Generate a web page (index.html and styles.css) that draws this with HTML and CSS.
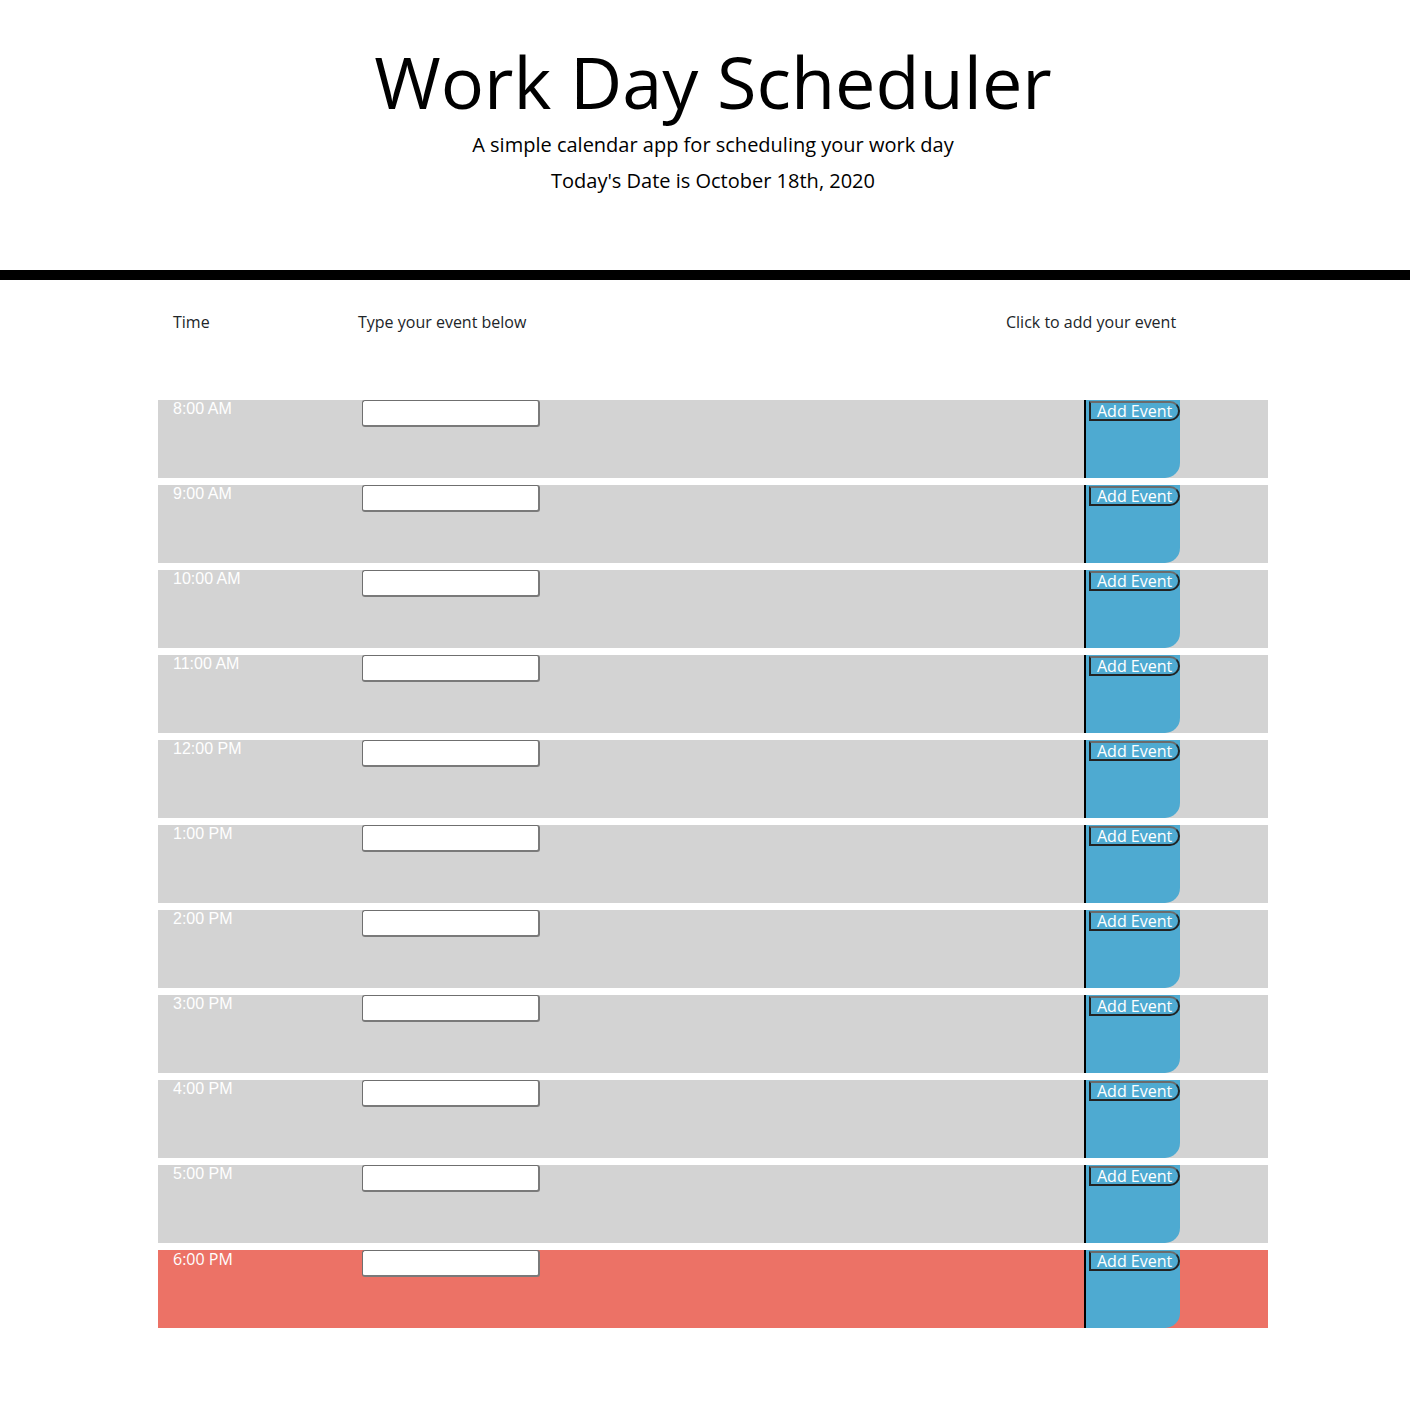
FILE: index.html
```html
<!DOCTYPE html>
<html lang="en">
<head>
<meta charset="utf-8">
<title>Work Day Scheduler</title>
<link rel="stylesheet" href="styles.css">
</head>
<body>
<header class="jumbotron">
  <h1 class="title">Work Day Scheduler</h1>
  <p class="lead">A simple calendar app for scheduling your work day</p>
  <p class="today">Today's Date is October 18th, 2020</p>
</header>
<div class="divider"></div>
<main class="container">
  <div class="labels">
    <div class="col-time">Time</div>
    <div class="col-event">Type your event below</div>
    <div class="col-add">Click to add your event</div>
  </div>
  <div class="rows">
    <div class="row past"><div class="hour">8:00 AM</div><div class="event"><input class="event-input" type="text"></div><div class="save"><button class="save-btn">Add Event</button></div></div>
    <div class="row past"><div class="hour">9:00 AM</div><div class="event"><input class="event-input" type="text"></div><div class="save"><button class="save-btn">Add Event</button></div></div>
    <div class="row past"><div class="hour">10:00 AM</div><div class="event"><input class="event-input" type="text"></div><div class="save"><button class="save-btn">Add Event</button></div></div>
    <div class="row past"><div class="hour">11:00 AM</div><div class="event"><input class="event-input" type="text"></div><div class="save"><button class="save-btn">Add Event</button></div></div>
    <div class="row past"><div class="hour">12:00 PM</div><div class="event"><input class="event-input" type="text"></div><div class="save"><button class="save-btn">Add Event</button></div></div>
    <div class="row past"><div class="hour">1:00 PM</div><div class="event"><input class="event-input" type="text"></div><div class="save"><button class="save-btn">Add Event</button></div></div>
    <div class="row past"><div class="hour">2:00 PM</div><div class="event"><input class="event-input" type="text"></div><div class="save"><button class="save-btn">Add Event</button></div></div>
    <div class="row past"><div class="hour">3:00 PM</div><div class="event"><input class="event-input" type="text"></div><div class="save"><button class="save-btn">Add Event</button></div></div>
    <div class="row past"><div class="hour">4:00 PM</div><div class="event"><input class="event-input" type="text"></div><div class="save"><button class="save-btn">Add Event</button></div></div>
    <div class="row past"><div class="hour">5:00 PM</div><div class="event"><input class="event-input" type="text"></div><div class="save"><button class="save-btn">Add Event</button></div></div>
    <div class="row present"><div class="hour">6:00 PM</div><div class="event"><input class="event-input" type="text"></div><div class="save"><button class="save-btn">Add Event</button></div></div>
  </div>
</main>
</body>
</html>
```
FILE: styles.css
```css
html, body {
  margin: 0;
  padding: 0;
  background: #fff;
  font-family: "Open Sans", "Noto Sans", sans-serif;
  color: #212529;
}

.jumbotron {
  text-align: center;
  padding-top: 37px;
  padding-left: 16px;
  height: 230px;
  box-sizing: border-box;
}

.title {
  margin: 0;
  font-size: 72px;
  font-weight: 400;
  line-height: 88px;
  color: #000;
}

.lead {
  margin: 5px 0 0;
  font-size: 20px;
  line-height: 30px;
  color: #000;
}

.today {
  margin: 6px 0 0;
  font-size: 20px;
  line-height: 30px;
  color: #000;
}

.divider {
  margin-top: 40px;
  height: 10px;
  background: #000;
}

.container {
  width: 1110px;
  margin-left: 158px;
  padding-bottom: 98px;
}

.labels {
  display: flex;
  height: 120px;
  padding-top: 30px;
  box-sizing: border-box;
  font-size: 16px;
  line-height: 24px;
}

.col-time {
  width: 185px;
  padding-left: 15px;
  box-sizing: border-box;
}

.col-event {
  width: 648px;
  padding-left: 15px;
  box-sizing: border-box;
}

.col-add {
  padding-left: 15px;
}

.rows {
  display: flex;
  flex-direction: column;
  gap: 7px;
}

.row {
  display: flex;
  height: 78px;
}

.past {
  background: #d3d3d3;
}

.present {
  background: #ec7266;
}

.hour {
  width: 185px;
  padding-left: 15px;
  padding-top: 1px;
  box-sizing: border-box;
  color: #fff;
  font-size: 16px;
  line-height: 16px;
}

.past .hour {
  font-family: "Liberation Sans", Arial, sans-serif;
}

.event {
  width: 741px;
  padding-left: 19px;
  box-sizing: border-box;
}

.event-input {
  display: block;
  width: 178px;
  height: 27px;
  box-sizing: border-box;
  margin: 0;
  border-style: solid;
  border-width: 1px 2px 2px 1px;
  border-color: #6f6f6f #7a7a7a #7a7a7a #6f6f6f;
  border-radius: 3px;
  background: #fff;
  font-family: "Open Sans", sans-serif;
}

.save {
  width: 96px;
  box-sizing: border-box;
  border-left: 2px solid #000;
  background: #4eaad1;
  border-bottom-right-radius: 15px;
  padding-left: 3px;
  padding-top: 1px;
}

.save-btn {
  display: block;
  width: 91px;
  height: 20px;
  box-sizing: border-box;
  margin: 0;
  padding: 0 0 0 6px;
  text-align: left;
  background: #4eaad1;
  color: #fff;
  font-family: "Open Sans", sans-serif;
  font-size: 16px;
  line-height: 15px;
  border: 2px solid #222;
  border-top-color: #6b6b6b;
  border-radius: 0 10px 10px 0;
}
```
